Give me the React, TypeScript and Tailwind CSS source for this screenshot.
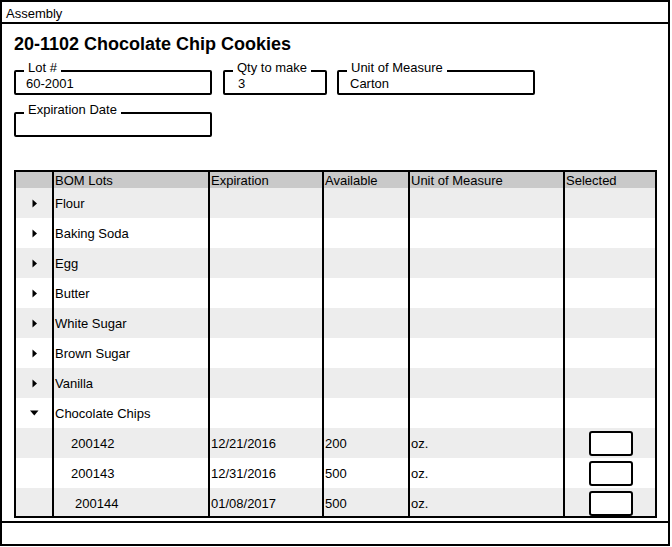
const font = "font-['Liberation_Sans','Arial',sans-serif]";

type Row = {
  name: string;
  arrow?: "right" | "down";
  indent?: string;
  exp?: string;
  avail?: string;
  uom?: string;
  check?: boolean;
};

const rows: Row[] = [
  { name: "Flour", arrow: "right" },
  { name: "Baking Soda", arrow: "right" },
  { name: "Egg", arrow: "right" },
  { name: "Butter", arrow: "right" },
  { name: "White Sugar", arrow: "right" },
  { name: "Brown Sugar", arrow: "right" },
  { name: "Vanilla", arrow: "right" },
  { name: "Chocolate Chips", arrow: "down" },
  { name: "200142", indent: "pl-[17px]", exp: "12/21/2016", avail: "200", uom: "oz.", check: true },
  { name: "200143", indent: "pl-[17px]", exp: "12/31/2016", avail: "500", uom: "oz.", check: true },
  { name: "200144", indent: "pl-[21px]", exp: "01/08/2017", avail: "500", uom: "oz.", check: true },
];

const cols = "grid grid-cols-[36px_156px_114px_86px_155px_1fr]";

function Arrow({ dir }: { dir: "right" | "down" }) {
  if (dir === "down") {
    return (
      <svg width="9" height="6" viewBox="0 0 9 6">
        <polygon points="0,0.5 8.5,0.5 4.3,5.5" fill="#000" />
      </svg>
    );
  }
  return (
    <svg width="6" height="9" viewBox="0 0 6 9">
      <polygon points="0.5,0.5 5,4.5 0.5,8.5" fill="#000" />
    </svg>
  );
}

function Field({
  label,
  value,
  width,
  pad,
}: {
  label: string;
  value?: string;
  width: string;
  pad: string;
}) {
  return (
    <div className={`relative h-[25px] border-2 border-black rounded-[2px] ${width}`}>
      <span className="absolute left-[8px] top-[-12px] bg-white px-1 text-[13px] leading-[15px]">
        {label}
      </span>
      {value && (
        <div className={`pt-[4px] text-[13px] leading-[15px] ${pad}`}>{value}</div>
      )}
    </div>
  );
}

export default function App() {
  return (
    <div className={`w-[672px] h-[547px] bg-white text-black ${font}`}>
      <div className="w-[670px] h-[546px] border-2 border-black flex flex-col">
        <div className="h-[22px] border-b-2 border-black pl-[4px] pt-[4px] text-[13px] leading-[15px]">
          Assembly
        </div>

        <div className="flex-1 pl-[12px] pt-[10px]">
          <h1 className="text-[18px] leading-[20px] font-bold">20-1102 Chocolate Chip Cookies</h1>

          <div className="mt-[16px] flex">
            <Field label="Lot #" value="60-2001" width="w-[198px]" pad="pl-[10px]" />
            <div className="ml-[11px]">
              <Field label="Qty to make" value="3" width="w-[104px]" pad="pl-[13px]" />
            </div>
            <div className="ml-[10px]">
              <Field label="Unit of Measure" value="Carton" width="w-[198px]" pad="pl-[11px]" />
            </div>
          </div>

          <div className="mt-[17px]">
            <Field label="Expiration Date" width="w-[198px]" pad="pl-[10px]" />
          </div>

          <div className="mt-[33px] w-[643px] h-[348px] border-2 border-black overflow-hidden text-[13px] leading-[15px]">
            <div className={`${cols} h-[16px] bg-[#c9c9c9]`}>
              <div />
              <div className="border-l-2 border-black pl-[1px] flex items-center">BOM Lots</div>
              <div className="border-l-2 border-black pl-[1px] flex items-center">Expiration</div>
              <div className="border-l-2 border-black pl-[1px] flex items-center">Available</div>
              <div className="border-l-2 border-black pl-[1px] flex items-center">Unit of Measure</div>
              <div className="border-l-2 border-black pl-[1px] flex items-center">Selected</div>
            </div>
            {rows.map((r, i) => (
              <div
                key={r.name}
                className={`${cols} h-[30px] ${i % 2 === 0 ? "bg-[#ededed]" : "bg-white"}`}
              >
                <div className="flex items-center justify-center pl-[1px]">
                  {r.arrow && <Arrow dir={r.arrow} />}
                </div>
                <div className={`border-l-2 border-black flex items-center ${r.indent ?? "pl-[1px]"}`}>
                  {r.name}
                </div>
                <div className="border-l-2 border-black pl-[1px] flex items-center">{r.exp}</div>
                <div className="border-l-2 border-black pl-[1px] flex items-center">{r.avail}</div>
                <div className="border-l-2 border-black pl-[1px] flex items-center">{r.uom}</div>
                <div className="border-l-2 border-black flex items-center justify-center pl-[2px]">
                  {r.check && (
                    <div className="w-[44px] h-[25px] border-2 border-black rounded-[3px] bg-white" />
                  )}
                </div>
              </div>
            ))}
          </div>
        </div>

        <div className="h-[23px] border-t-2 border-black" />
      </div>
    </div>
  );
}
